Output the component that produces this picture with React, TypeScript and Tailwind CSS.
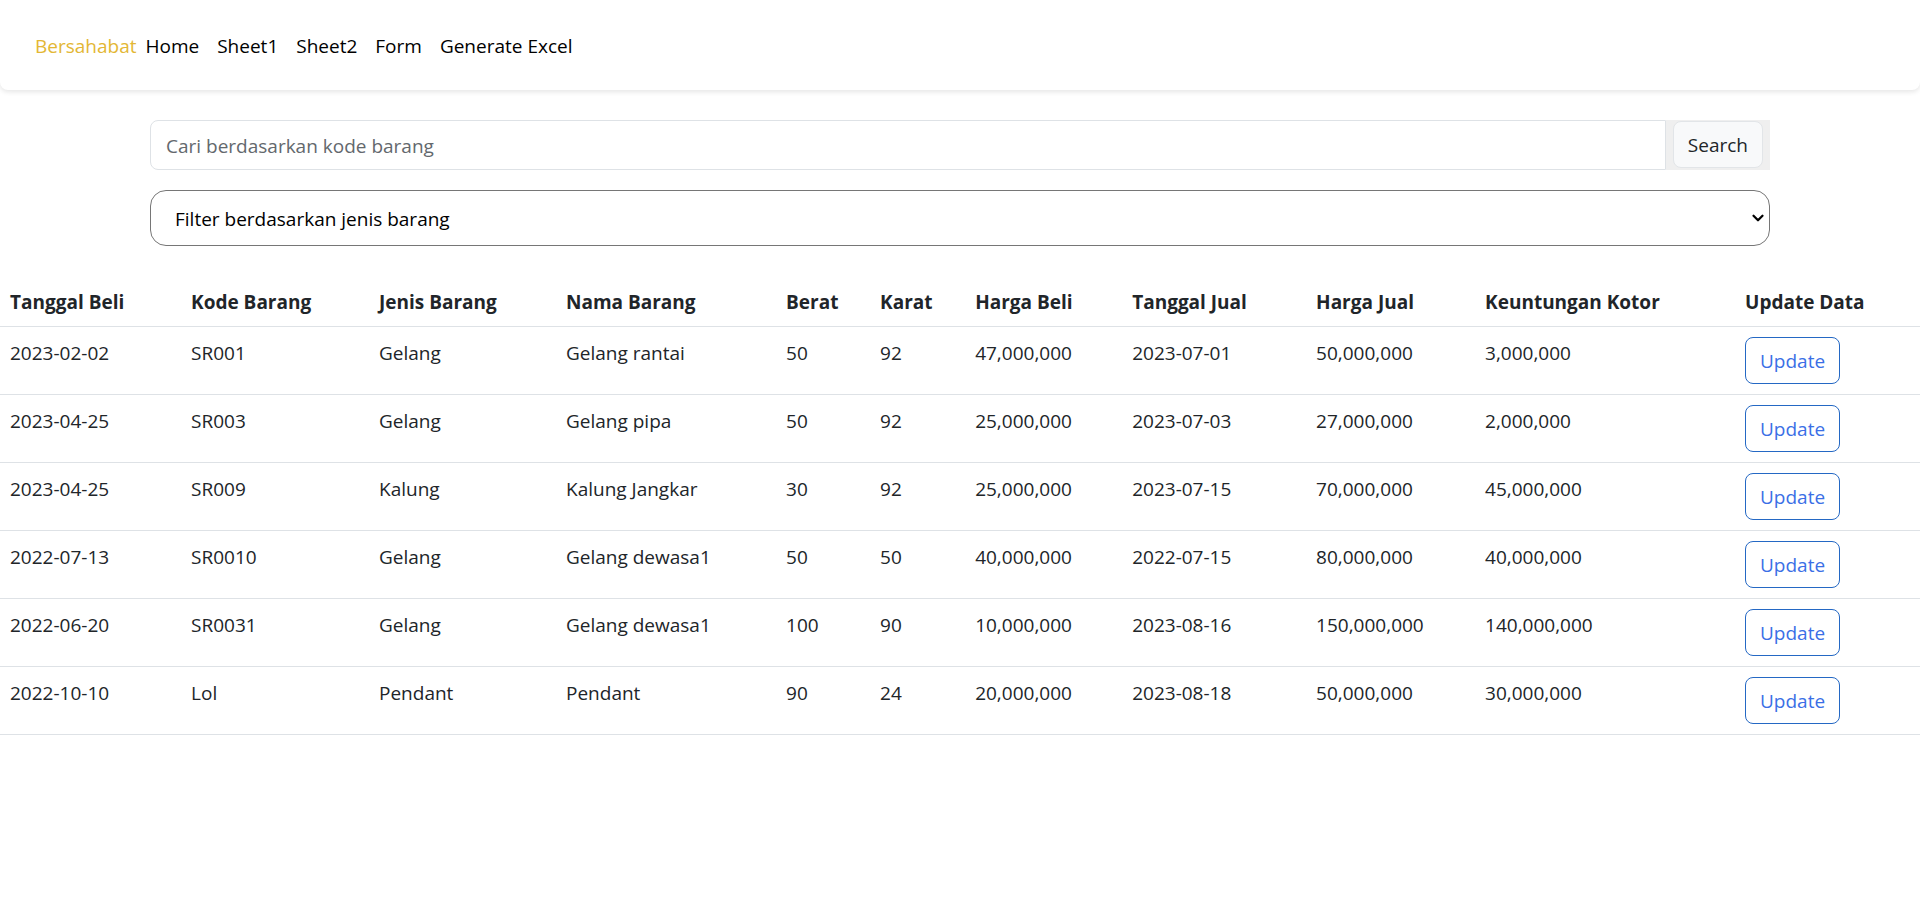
import { ChevronDown } from "lucide-react";

const links = ["Home", "Sheet1", "Sheet2", "Form", "Generate Excel"];

const columns = [
  { title: "Tanggal Beli", width: "w-[9.43%]" },
  { title: "Kode Barang", width: "w-[9.79%]" },
  { title: "Jenis Barang", width: "w-[9.74%]" },
  { title: "Nama Barang", width: "w-[11.46%]" },
  { title: "Berat", width: "w-[4.9%]" },
  { title: "Karat", width: "w-[4.95%]" },
  { title: "Harga Beli", width: "w-[8.18%]" },
  { title: "Tanggal Jual", width: "w-[9.58%]" },
  { title: "Harga Jual", width: "w-[8.8%]" },
  { title: "Keuntungan Kotor", width: "w-[13.54%]" },
  { title: "Update Data", width: "w-[9.63%]" },
];

const rows = [
  ["2023-02-02", "SR001", "Gelang", "Gelang rantai", "50", "92", "47,000,000", "2023-07-01", "50,000,000", "3,000,000"],
  ["2023-04-25", "SR003", "Gelang", "Gelang pipa", "50", "92", "25,000,000", "2023-07-03", "27,000,000", "2,000,000"],
  ["2023-04-25", "SR009", "Kalung", "Kalung Jangkar", "30", "92", "25,000,000", "2023-07-15", "70,000,000", "45,000,000"],
  ["2022-07-13", "SR0010", "Gelang", "Gelang dewasa1", "50", "50", "40,000,000", "2022-07-15", "80,000,000", "40,000,000"],
  ["2022-06-20", "SR0031", "Gelang", "Gelang dewasa1", "100", "90", "10,000,000", "2023-08-16", "150,000,000", "140,000,000"],
  ["2022-10-10", "Lol", "Pendant", "Pendant", "90", "24", "20,000,000", "2023-08-18", "50,000,000", "30,000,000"],
];

function Navbar() {
  return (
    <nav className="flex items-center rounded-b-lg bg-white px-[35px] pt-[31px] pb-[29px] shadow-[0_2px_5px_rgba(0,0,0,0.1)]">
      <a href="#" className="text-[#e3b734]">
        Bersahabat
      </a>
      <ul className="flex">
        {links.map((link) => (
          <li key={link}>
            <a href="#" className="block px-[9px] text-black">
              {link}
            </a>
          </li>
        ))}
      </ul>
    </nav>
  );
}

function Filters() {
  return (
    <div className="flex flex-col gap-5 px-[150px] pt-[30px]">
      <form className="flex h-[50px]">
        <input
          type="text"
          aria-label="Cari berdasarkan kode barang"
          placeholder="Cari berdasarkan kode barang"
          className="min-w-0 flex-1 rounded-l-lg border border-[#dee2e6] bg-white px-[15px] pt-[2px] placeholder:text-[#63686d]"
        />
        <div className="flex items-start bg-[#efefef] px-[7px] pt-px">
          <button
            type="button"
            className="h-[47px] rounded-lg border border-[#e2e5e8] bg-[#f8f9fa] px-[14px] pt-px text-[#212529]"
          >
            Search
          </button>
        </div>
      </form>
      <div className="relative">
        <select
          aria-label="Filter berdasarkan jenis barang"
          className="h-14 w-full appearance-none rounded-2xl border border-[#767676] bg-white px-6 pt-[2px] text-black"
        >
          <option>Filter berdasarkan jenis barang</option>
          <option>Gelang</option>
          <option>Kalung</option>
          <option>Pendant</option>
        </select>
        <ChevronDown
          className="pointer-events-none absolute inset-y-0 right-[3px] my-auto size-[18px] text-black"
          strokeWidth={3}
        />
      </div>
    </div>
  );
}

function ItemsTable() {
  return (
    <table className="mt-[30px] w-full table-fixed border-collapse text-left text-[#212529]">
      <thead>
        <tr className="border-b border-[#dee2e6]">
          {columns.map((column) => (
            <th key={column.title} scope="col" className={`${column.width} px-[10px] pt-[11px] pb-[9px] font-bold`}>
              {column.title}
            </th>
          ))}
        </tr>
      </thead>
      <tbody>
        {rows.map((row) => (
          <tr key={row[1]} className="border-b border-[#dee2e6]">
            {row.map((cell, index) => (
              <td key={index} className="px-[10px] pt-[11px] pb-[9px] align-top">
                {cell}
              </td>
            ))}
            <td className="p-[10px] align-top">
              <button
                type="button"
                className="block h-[47px] rounded-lg border border-[#2468c4] px-[14px] text-[#3b6fe6]"
              >
                Update
              </button>
            </td>
          </tr>
        ))}
      </tbody>
    </table>
  );
}

export default function App() {
  return (
    <div className="min-h-screen bg-white font-['Open_Sans','Noto_Sans',sans-serif] text-[19px] leading-[30px]">
      <Navbar />
      <main>
        <Filters />
        <ItemsTable />
      </main>
    </div>
  );
}
